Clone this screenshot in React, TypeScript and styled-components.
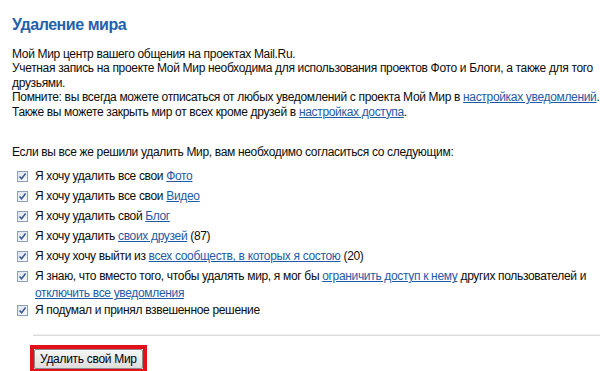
import styled, { createGlobalStyle } from 'styled-components';

const GlobalStyle = createGlobalStyle`
  html, body {
    margin: 0;
    padding: 0;
    background: #fff;
    overflow: hidden;
  }
  body {
    font-family: "Liberation Sans", Arial, sans-serif;
    font-size: 12px;
    letter-spacing: -0.33px;
    color: #0c0c0c;
  }
`;

const Page = styled.div`
  width: 600px;
  height: 371px;
  overflow: hidden;
  padding-left: 12px;
  box-sizing: border-box;
`;

const Title = styled.h1`
  margin: 15px 0 12px;
  font-size: 16px;
  line-height: 20px;
  letter-spacing: -0.45px;
  font-weight: bold;
  color: #2461ab;
`;

const Text = styled.p<{ $gap?: number }>`
  margin: 0 0 ${(p) => p.$gap ?? 0}px;
  line-height: 14.4px;
  white-space: nowrap;
`;

const Link = styled.a`
  color: #1f5aa5;
  text-decoration: underline;
  cursor: pointer;
`;

const CheckList = styled.ul`
  list-style: none;
  margin: 9px 0 0;
  padding: 0 0 0 5px;
`;

const Row = styled.li`
  display: flex;
  align-items: flex-start;
  gap: 7px;
  min-height: 20px;
  line-height: 17px;
  white-space: nowrap;
`;

const Box = styled.span`
  flex: none;
  width: 11px;
  height: 11px;
  margin-top: 3px;
  box-sizing: border-box;
  border: 1px solid #8da0bb;
  background: linear-gradient(135deg, #dfe5ee 0%, #f7f9fc 100%);
  display: flex;
  align-items: center;
  justify-content: center;
`;

const Divider = styled.div`
  margin: 12px 0 9px 21px;
  border-top: 1px solid #efefef;
  border-bottom: 1px solid #dcdcdc;
`;

const ButtonFrame = styled.div`
  display: inline-block;
  margin-left: 18px;
  border: 4px solid #e3101c;
`;

const DeleteButton = styled.button`
  display: block;
  margin: 0;
  padding: 2px 5px 2px;
  font-family: "Liberation Sans", Arial, sans-serif;
  font-size: 12px;
  letter-spacing: -0.3px;
  line-height: 14px;
  color: #000;
  background: linear-gradient(#f6f6f6, #dddddd);
  border: 1px solid #8a8a8a;
  border-radius: 2px;
`;

const Check = () => (
  <Box>
    <svg width="9" height="9" viewBox="0 0 9 9">
      <path d="M1.5 4.5 L3.6 6.8 L7.6 1.6" fill="none" stroke="#3b5a9a" strokeWidth="1.6" />
    </svg>
  </Box>
);

const items = [
  <>Я хочу удалить все свои <Link>Фото</Link></>,
  <>Я хочу удалить все свои <Link>Видео</Link></>,
  <>Я хочу удалить свой <Link>Блог</Link></>,
  <>Я хочу удалить <Link>своих друзей</Link> (87)</>,
  <>Я хочу хочу выйти из <Link>всех сообществ, в которых я состою</Link> (20)</>,
  <>
    Я знаю, что вместо того, чтобы удалять мир, я мог бы <Link>ограничить доступ к нему</Link> других пользователей и
    <br />
    <Link>отключить все уведомления</Link>
  </>,
  <>Я подумал и принял взвешенное решение</>,
];

export default function App() {
  return (
    <>
      <GlobalStyle />
      <Page>
        <Title>Удаление мира</Title>
        <Text>Мой Мир центр вашего общения на проектах Mail.Ru.</Text>
        <Text>Учетная запись на проекте Мой Мир необходима для использования проектов Фото и Блоги, а также для того</Text>
        <Text>друзьями.</Text>
        <Text>
          Помните: вы всегда можете отписаться от любых уведомлений с проекта Мой Мир в <Link>настройках уведомлений</Link>.
        </Text>
        <Text $gap={26}>
          Также вы можете закрыть мир от всех кроме друзей в <Link>настройках доступа</Link>.
        </Text>
        <Text>Если вы все же решили удалить Мир, вам необходимо согласиться со следующим:</Text>
        <CheckList>
          {items.map((content, i) => (
            <Row key={i}>
              <Check />
              <span>{content}</span>
            </Row>
          ))}
        </CheckList>
        <Divider />
        <ButtonFrame>
          <DeleteButton>Удалить свой Мир</DeleteButton>
        </ButtonFrame>
      </Page>
    </>
  );
}
